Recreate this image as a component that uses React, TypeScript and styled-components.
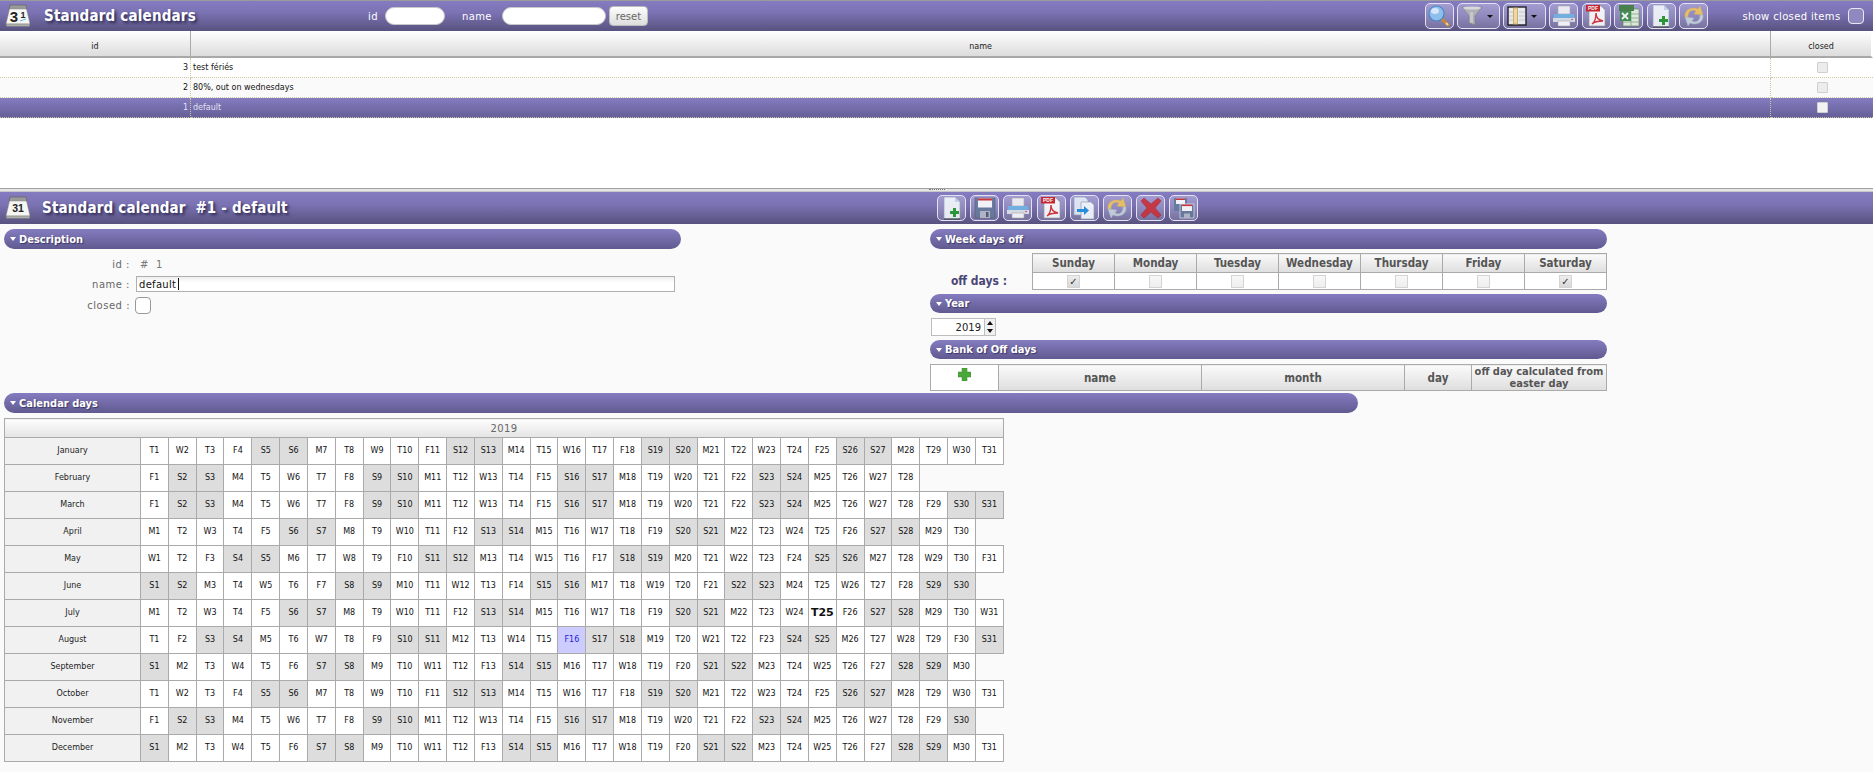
import React from 'react';
import styled, { createGlobalStyle } from 'styled-components';

const GlobalStyle = createGlobalStyle`
    html, body {
        margin: 0;
        padding: 0;
        background: #fafafa;
    }
    body {
        font-family: 'DejaVu Sans', Verdana, sans-serif;
        overflow: hidden;
    }
`;

const Page = styled.div`
    display: flex;
    flex-direction: column;
    width: 1873px;
    height: 772px;
    overflow: hidden;

    & > * {
        flex-shrink: 0;
    }
`;

const TopPane = styled.div`
    height: 188px;
    background: #fff;
`;

const Bar = styled.div<{ $detail?: boolean }>`
    display: flex;
    align-items: center;
    box-sizing: border-box;
    height: ${(p) => (p.$detail ? '32px' : '31px')};
    padding-left: 5px;
    border-top: ${(p) => (p.$detail ? 'none' : '1px solid #9a9a9a')};
    background: linear-gradient(#847cc0, #7a72b2 40%, #58527f);
`;

const Title = styled.div<{ $width: number; $gap: number }>`
    width: ${(p) => p.$width}px;
    margin-left: ${(p) => p.$gap}px;
    color: #fff;
    font-size: 15px;
    font-weight: bold;
    font-stretch: condensed;
    letter-spacing: 0.18px;
    white-space: pre;
    text-shadow: 2px 2px 3px #2b2750;
`;

const FilterLabel = styled.label<{ $gap: number }>`
    margin-left: ${(p) => p.$gap}px;
    color: #fff;
    font-size: 10px;
    letter-spacing: 0.4px;
`;

const FilterInput = styled.input<{ $width: number; $gap: number }>`
    box-sizing: border-box;
    width: ${(p) => p.$width}px;
    height: 18px;
    margin-left: ${(p) => p.$gap}px;
    background: #fff;
    border: 1px solid #c8c8c8;
    border-radius: 9px;
    outline: none;
`;

const ResetButton = styled.button`
    box-sizing: border-box;
    width: 39px;
    height: 20px;
    margin-left: 3px;
    padding: 0;
    color: #666;
    background: linear-gradient(#fdfdfd, #dddddd);
    border: 1px solid #bbb;
    border-radius: 4px;
    font-family: inherit;
    font-size: 10px;
`;

const Tools = styled.div<{ $left: number; $gap: number }>`
    display: flex;
    gap: ${(p) => p.$gap}px;
    margin-left: ${(p) => p.$left}px;
`;

const ToolButton = styled.button<{ $wide?: boolean }>`
    display: flex;
    align-items: center;
    justify-content: ${(p) => (p.$wide ? 'flex-start' : 'center')};
    box-sizing: border-box;
    width: ${(p) => (p.$wide ? '42.5px' : '29px')};
    height: 26px;
    padding: ${(p) => (p.$wide ? '0 0 0 3px' : '0')};
    background: linear-gradient(#a29cd2, #8d87bb 55%, #77719f);
    border: 1px solid #e4e2f2;
    border-radius: 5px;

    & svg {
        opacity: 0.88;
    }
`;

const Caret = styled.span`
    margin-left: 4px;
    border-top: 3px solid #111;
    border-left: 3px solid transparent;
    border-right: 3px solid transparent;
`;

const ShowClosed = styled.span`
    margin-left: 34px;
    color: #fff;
    font-size: 10px;
    letter-spacing: 0.35px;
    white-space: nowrap;
`;

const ShowBox = styled.span`
    box-sizing: border-box;
    width: 16px;
    height: 16px;
    margin-left: 8px;
    background: #8f89c0;
    border: 1px solid #e8e8f4;
    border-radius: 4px;
`;

const ListTable = styled.table`
    width: 100%;
    table-layout: fixed;
    border-collapse: separate;
    border-spacing: 0;
`;

const IdCol = styled.col`
    width: 191px;
`;

const ClosedCol = styled.col`
    width: 102px;
`;

const ListHead = styled.th`
    box-sizing: border-box;
    height: 27px;
    padding: 5px 0 0;
    background: linear-gradient(#ffffff, #dcdcdc);
    border-right: 1px solid #aaa;
    border-bottom: 2px solid #a8a8a8;
    color: #222;
    font-size: 8px;
    font-weight: normal;

    &:last-child {
        border-right: 2px solid #fff;
    }
`;

const ListRow = styled.tr<{ $selected?: boolean; $odd?: boolean }>`
    color: ${(p) => (p.$selected ? '#e4e2f2' : '#111')};
    background: ${(p) =>
        p.$selected ? 'linear-gradient(#847cc0, #645e96)' : p.$odd ? '#fafafa' : '#fff'};
`;

const ListCell = styled.td<{ $align?: string }>`
    box-sizing: border-box;
    height: 20px;
    padding: 0 2px;
    border-right: 1px dotted #cfc7a6;
    border-bottom: 1px dotted #cfc7a6;
    font-size: 8px;
    text-align: ${(p) => p.$align || 'left'};

    &:last-child {
        border-right: none;
    }
`;

const ListCheck = styled.span<{ $selected?: boolean }>`
    display: inline-block;
    box-sizing: border-box;
    width: 11px;
    height: 11px;
    vertical-align: middle;
    background: ${(p) => (p.$selected ? '#f2f2f2' : '#ececec')};
    border: 1px solid #cfcfcf;
    border-radius: 1px;
`;

const Splitter = styled.div`
    display: flex;
    justify-content: center;
    box-sizing: border-box;
    height: 4px;
    border-top: 1px solid #a0a0a0;
    border-bottom: 1px solid #c8c8c8;
    background: #e6e6e6;
`;

const SplitDots = styled.span`
    width: 16px;
    height: 1px;
    border-top: 1px dotted #777;
`;

const DetailColumns = styled.div`
    display: grid;
    grid-template-columns: 930px 677px;
    padding-top: 5px;
`;

const LeftColumn = styled.div`
    padding-left: 4px;
`;

const RightColumn = styled.div`
    display: flex;
    flex-direction: column;
`;

const Section = styled.div<{ $width?: number; $height?: number }>`
    display: flex;
    align-items: center;
    flex-shrink: 0;
    box-sizing: border-box;
    width: ${(p) => (p.$width ? `${p.$width}px` : '100%')};
    height: ${(p) => p.$height || 20}px;
    padding-left: 6px;
    color: #fff;
    background: linear-gradient(#847cc0, #605a90);
    border-radius: 10px;
    font-size: 11px;
    font-weight: bold;
    font-stretch: condensed;
    text-shadow: 1px 1px 1px #3a3666;
`;

const SectionArrow = styled.span`
    margin-right: 3px;
    border-top: 4px solid #fff;
    border-left: 3px solid transparent;
    border-right: 3px solid transparent;
`;

const FormRow = styled.div<{ $top: number; $height: number }>`
    display: flex;
    align-items: center;
    height: ${(p) => p.$height}px;
    margin-top: ${(p) => p.$top}px;
`;

const FormLabel = styled.label`
    width: 126px;
    flex-shrink: 0;
    margin-right: 6px;
    color: #666;
    font-size: 10px;
    letter-spacing: 0.5px;
    text-align: right;
    white-space: pre;
`;

const FormValue = styled.span`
    margin-left: 4px;
    color: #777;
    font-size: 10px;
    letter-spacing: 0.4px;
    white-space: pre;
`;

const NameField = styled.div`
    position: relative;
    display: flex;
`;

const NameInput = styled.input`
    box-sizing: border-box;
    width: 539px;
    height: 16px;
    padding: 0 2px;
    background: linear-gradient(#eeeeee, #ffffff 40%);
    border: 1px solid #b0b0b0;
    outline: none;
    color: #111;
    font-family: inherit;
    font-size: 10px;
    letter-spacing: 0.3px;
`;

const TextCursor = styled.span`
    position: absolute;
    top: 2px;
    left: 42px;
    width: 1px;
    height: 12px;
    background: #111;
`;

const ClosedBox = styled.span`
    box-sizing: border-box;
    width: 16px;
    height: 17px;
    margin-left: -1px;
    background: #fff;
    border: 1px solid #999;
    border-radius: 4px;
`;

const WeekWrap = styled.div`
    display: flex;
    align-items: flex-end;
    margin: 4px 0;
`;

const OffLabel = styled.div`
    width: 77px;
    height: 18px;
    margin-right: 25px;
    color: #4a4676;
    font-size: 12px;
    font-weight: bold;
    font-stretch: condensed;
    line-height: 18px;
    text-align: right;
    white-space: nowrap;
`;

const GridTable = styled.table<{ $width: number }>`
    box-sizing: border-box;
    width: ${(p) => p.$width}px;
    table-layout: fixed;
    border-collapse: collapse;
`;

const GreyHead = styled.th<{ $small?: boolean }>`
    box-sizing: border-box;
    padding: 0;
    height: 19px;
    color: #555;
    background: linear-gradient(#fafafa, #dedede);
    border: 1px solid #aaa;
    font-size: ${(p) => (p.$small ? '11px' : '11.5px')};
    font-weight: bold;
    font-stretch: condensed;
    line-height: 12px;
`;

const CheckCell = styled.td`
    box-sizing: border-box;
    height: 17px;
    padding: 0;
    background: #fff;
    border: 1px solid #aaa;
    line-height: 0;
    text-align: center;
`;

const WeekCheck = styled.span<{ $on?: boolean }>`
    display: inline-block;
    box-sizing: border-box;
    width: 13px;
    height: 13px;
    vertical-align: middle;
    color: #333;
    background: ${(p) => (p.$on ? 'linear-gradient(#eeeeee, #d8d8d8)' : 'linear-gradient(#f8f8f8, #eeeeee)')};
    border: 1px solid #d4d4d4;
    font-size: 10px;
    line-height: 11px;
`;

const YearWrap = styled.div`
    display: flex;
    align-items: stretch;
    height: 18px;
    margin: 5px 0 4px 1px;
`;

const YearInput = styled.input`
    box-sizing: border-box;
    width: 54px;
    padding: 0 3px 0 0;
    background: #fff;
    border: 1px solid #bdbdbd;
    outline: none;
    color: #222;
    font-family: inherit;
    font-size: 10px;
    text-align: right;
`;

const Spinner = styled.div`
    display: flex;
    flex-direction: column;
    width: 10px;
    border: 1px solid #bdbdbd;
    border-left: none;
`;

const SpinArrow = styled.span<{ $down?: boolean }>`
    flex: 1;
    display: flex;
    align-items: center;
    justify-content: center;
    background: #f0f0f0;

    &::before {
        content: '';
        border-left: 3px solid transparent;
        border-right: 3px solid transparent;
        ${(p) => (p.$down ? 'border-top: 4px solid #111;' : 'border-bottom: 4px solid #111;')}
    }
`;

const BankWrap = styled.div`
    margin-top: 5px;
`;

const PlusCell = styled.th`
    box-sizing: border-box;
    padding: 3px 0 0;
    height: 26px;
    vertical-align: top;
    background: #fff;
    border: 1px solid #aaa;
    line-height: 0;
`;

const NarrowCol = styled.col<{ $width: number }>`
    width: ${(p) => p.$width}px;
`;

const CalendarWrap = styled.div`
    padding: 2px 0 0 4px;
`;

const CalendarTable = styled.table`
    width: 1000px;
    height: 342px;
    margin-top: 5px;
    table-layout: fixed;
    border-collapse: collapse;
`;

const MonthCol = styled.col`
    width: 136px;
`;

const YearHead = styled.th`
    height: 18px;
    padding: 0;
    color: #666;
    background: linear-gradient(#fdfdfd, #e4e4e4);
    border: 1px solid #aaa;
    font-size: 10px;
    font-weight: normal;
    letter-spacing: 0.4px;
`;

const MonthCell = styled.td`
    height: 26px;
    padding: 0;
    color: #222;
    background: #f1f1f1;
    border: 1px solid #aaa;
    font-size: 8px;
    line-height: 10px;
    text-align: center;
`;

const DayCell = styled.td<{ $off?: boolean; $current?: boolean; $today?: boolean }>`
    padding: 0;
    color: ${(p) => (p.$current ? '#2222dd' : '#111')};
    background: ${(p) => (p.$current ? '#ccccff' : p.$off ? '#dddddd' : '#fff')};
    border: 1px solid #aaa;
    font-size: ${(p) => (p.$today ? '11px' : '8px')};
    font-weight: ${(p) => (p.$today ? 'bold' : 'normal')};
    line-height: 10px;
    text-align: center;
    white-space: nowrap;
`;

const CalendarIcon = ({ flip }: { flip?: boolean }) => (
    <svg width="26" height="24" viewBox="0 0 26 24">
        <path d="M5 1h16l1 5H4z" fill="#9a9a98" stroke="#5a5a5a" strokeWidth="0.6" />
        <path d="M4.5 5h17L25 20H1z" fill="#f6f6f2" stroke="#8a8a8a" strokeWidth="0.5" />
        <path d="M1 20h24l-.5 2.5h-23z" fill="#aeaeac" stroke="#6d6d6d" strokeWidth="0.4" />
        {flip ? (
            <>
                <text x="9" y="18" fontSize="15" fontWeight="bold" fontFamily="'Liberation Sans', sans-serif" textAnchor="middle" fill="#222">3</text>
                <text x="18" y="14" fontSize="9" fontWeight="bold" fontFamily="'Liberation Sans', sans-serif" textAnchor="middle" fill="#222">1</text>
                <path d="M15 17l6-2" stroke="#6fb5e6" strokeWidth="1" />
            </>
        ) : (
            <text x="13" y="16" fontSize="10.5" fontWeight="bold" fontFamily="'Liberation Sans', sans-serif" textAnchor="middle" fill="#222">31</text>
        )}
    </svg>
);

const SearchIcon = () => (
    <svg width="24" height="24" viewBox="0 0 24 24">
        <path d="M14 14l7 7" stroke="#d88a22" strokeWidth="3" strokeLinecap="round" />
        <path d="M19 19l2 2" stroke="#f4e3a0" strokeWidth="2" />
        <circle cx="9.5" cy="9.5" r="7.5" fill="#8ec7f2" stroke="#3f86c8" strokeWidth="1.2" />
        <ellipse cx="8" cy="7" rx="4" ry="3" fill="#e0f2ff" />
    </svg>
);

const FunnelIcon = () => (
    <svg width="22" height="24" viewBox="0 0 22 24">
        <path d="M1 3h20l-7 9v9l-6-2v-7z" fill="#b4b4b4" stroke="#7f7f7f" strokeWidth="0.7" />
        <ellipse cx="11" cy="4" rx="9" ry="1.6" fill="#e2e2e2" />
        <path d="M9 8h3v11l-3-1z" fill="#cfcfcf" />
    </svg>
);

const ColumnsIcon = () => (
    <svg width="20" height="20" viewBox="0 0 20 20">
        <rect x="1" y="1" width="18" height="18" fill="#f4f4f4" stroke="#111" strokeWidth="1.4" />
        <rect x="6.5" y="2" width="4" height="16" fill="#f6e3a8" stroke="#d9a83c" strokeWidth="0.8" />
        <path d="M12 6h6M12 10h6M12 14h6M2 6h4M2 10h4M2 14h4" stroke="#c8c8c8" strokeWidth="0.8" />
    </svg>
);

const PrintIcon = () => (
    <svg width="24" height="24" viewBox="0 0 24 24">
        <path d="M6 2h12v8H6z" fill="#f5f5f5" stroke="#a8a8a8" strokeWidth="0.6" />
        <path d="M2 10h20l1 8H1z" fill="#6fb5e6" />
        <path d="M1 14h22v4H1z" fill="#dfe6ea" />
        <path d="M6 17h12v5H6z" fill="#fff" stroke="#a8a8a8" strokeWidth="0.6" />
        <circle cx="20" cy="15.5" r="0.8" fill="#d33" />
    </svg>
);

const PdfIcon = () => (
    <svg width="24" height="24" viewBox="0 0 24 24">
        <path d="M5 2h12l4 4v16H5z" fill="#fff" stroke="#9a9a9a" strokeWidth="0.7" />
        <rect x="2" y="1" width="14" height="6.5" fill="#cc1b1b" />
        <text x="9" y="6.2" fontSize="5" fontWeight="bold" fontFamily="'Liberation Sans', sans-serif" textAnchor="middle" fill="#fff">PDF</text>
        <path d="M8 20c3-2 4-6 4-11 0 4 2 7 7 8-4 0-8 0-11 3z" fill="none" stroke="#d8282a" strokeWidth="1.4" />
    </svg>
);

const ExcelIcon = () => (
    <svg width="24" height="24" viewBox="0 0 24 24">
        <rect x="6" y="5" width="16" height="17" fill="#eaf3e2" stroke="#5f9155" strokeWidth="0.7" />
        <path d="M14 5v17M6 10h16M6 14h16M6 18h16" stroke="#7fae76" strokeWidth="0.8" />
        <rect x="2" y="1" width="15" height="6" fill="#3d7d3b" />
        <rect x="3" y="7" width="11" height="10" fill="#3a8f46" />
        <path d="M5 9l6 6M11 9l-6 6" stroke="#fff" strokeWidth="1.8" />
    </svg>
);

const NewIcon = () => (
    <svg width="24" height="24" viewBox="0 0 24 24">
        <path d="M4 1h11l5 5v17H4z" fill="#f6fafd" stroke="#8aa0b4" strokeWidth="0.7" />
        <path d="M15 1v5h5z" fill="#c9d8e6" />
        <path d="M4 23h16" stroke="#222" strokeWidth="1" />
        <path d="M13 12h3v3h3v3h-3v3h-3v-3h-3v-3h3z" fill="#1e9a28" />
    </svg>
);

const RefreshIcon = () => (
    <svg width="24" height="24" viewBox="0 0 24 24">
        <path d="M3 13C2 6 9 2 16 5l2-3 3 9-9-1 2-3c-4-2-8 0-8 6z" fill="#f2c55c" stroke="#e0b24a" strokeWidth="0.5" />
        <path d="M21 11c1 7-6 11-13 8l-2 3-3-9 9 1-2 3c4 2 8 0 8-6z" fill="#c8d4de" stroke="#a8b8c6" strokeWidth="0.5" />
    </svg>
);

const SaveIcon = () => (
    <svg width="24" height="24" viewBox="0 0 24 24">
        <path d="M2 2h20v20H2z" fill="#63789a" stroke="#4d586c" strokeWidth="0.6" />
        <rect x="5" y="2.5" width="14" height="9" fill="#fff" />
        <rect x="5" y="2.5" width="14" height="2" fill="#d02a2a" />
        <rect x="7" y="15" width="10" height="7" fill="#b4bcc8" />
        <rect x="13" y="16" width="2.5" height="5" fill="#4d586c" />
    </svg>
);

const CopyIcon = () => (
    <svg width="24" height="24" viewBox="0 0 24 24">
        <path d="M2 1h11l3 3v15H2z" fill="#e8f0f8" stroke="#8aa0b4" strokeWidth="0.7" />
        <path d="M9 6h10l3 3v14H9z" fill="#fafcff" stroke="#8aa0b4" strokeWidth="0.7" />
        <path d="M5 13h7v-3l5 4.5-5 4.5v-3H5z" fill="#1b8fe0" />
    </svg>
);

const DeleteIcon = () => (
    <svg width="24" height="24" viewBox="0 0 24 24">
        <path d="M5 2l7 6 7-6 3 3-6 7 6 7-3 3-7-6-7 6-3-3 6-7-6-7z" fill="#cc2e36" stroke="#a82028" strokeWidth="0.6" />
    </svg>
);

const SaveAllIcon = () => (
    <svg width="24" height="24" viewBox="0 0 24 24">
        <path d="M2 2h13v13H2z" fill="#63789a" />
        <rect x="4" y="2.5" width="9" height="5.5" fill="#fff" />
        <rect x="4" y="2.5" width="9" height="1.5" fill="#d02a2a" />
        <path d="M8 8h14v14H8z" fill="#63789a" stroke="#f4f4f4" strokeWidth="0.7" />
        <rect x="10" y="8.5" width="10" height="6.5" fill="#fff" />
        <rect x="10" y="8.5" width="10" height="1.6" fill="#d02a2a" />
        <rect x="12" y="17.5" width="6" height="4.5" fill="#b4bcc8" />
    </svg>
);

const PlusIcon = () => (
    <svg width="13" height="13" viewBox="0 0 13 13">
        <path d="M4 0h5v4h4v5H9v4H4V9H0V4h4z" fill="#4aa83a" stroke="#3b8a2e" strokeWidth="0.5" />
    </svg>
);

const MONTHS = [
    'January',
    'February',
    'March',
    'April',
    'May',
    'June',
    'July',
    'August',
    'September',
    'October',
    'November',
    'December',
];
const LETTERS = ['S', 'M', 'T', 'W', 'T', 'F', 'S'];
const WEEK = ['Sunday', 'Monday', 'Tuesday', 'Wednesday', 'Thursday', 'Friday', 'Saturday'];
const LIST = [
    { id: 3, name: 'test fériés' },
    { id: 2, name: '80%, out on wednesdays' },
    { id: 1, name: 'default' },
];

const daysOf = (month: number) => new Date(2019, month + 1, 0).getDate();

const App: React.FC = () => {
    return (
        <Page>
            <GlobalStyle />
            <TopPane>
                <Bar>
                    <CalendarIcon flip />
                    <Title $width={150} $gap={13}>Standard calendars</Title>
                    <FilterLabel $gap={174}>id</FilterLabel>
                    <FilterInput $width={60} $gap={7} />
                    <FilterLabel $gap={17}>name</FilterLabel>
                    <FilterInput $width={104} $gap={10} />
                    <ResetButton>reset</ResetButton>
                    <Tools $left={777} $gap={3.5}>
                        <ToolButton><SearchIcon /></ToolButton>
                        <ToolButton $wide><FunnelIcon /><Caret /></ToolButton>
                        <ToolButton $wide><ColumnsIcon /><Caret /></ToolButton>
                        <ToolButton><PrintIcon /></ToolButton>
                        <ToolButton><PdfIcon /></ToolButton>
                        <ToolButton><ExcelIcon /></ToolButton>
                        <ToolButton><NewIcon /></ToolButton>
                        <ToolButton><RefreshIcon /></ToolButton>
                    </Tools>
                    <ShowClosed>show closed items</ShowClosed>
                    <ShowBox />
                </Bar>
                <ListTable>
                    <colgroup>
                        <IdCol />
                        <col />
                        <ClosedCol />
                    </colgroup>
                    <thead>
                        <tr>
                            <ListHead>id</ListHead>
                            <ListHead>name</ListHead>
                            <ListHead>closed</ListHead>
                        </tr>
                    </thead>
                    <tbody>
                        {LIST.map((row, i) => (
                            <ListRow key={row.id} $odd={i === 1} $selected={row.id === 1}>
                                <ListCell $align="right">{row.id}</ListCell>
                                <ListCell>{row.name}</ListCell>
                                <ListCell $align="center">
                                    <ListCheck $selected={row.id === 1} />
                                </ListCell>
                            </ListRow>
                        ))}
                    </tbody>
                </ListTable>
            </TopPane>
            <Splitter>
                <SplitDots />
            </Splitter>
            <Bar $detail>
                <CalendarIcon />
                <Title $width={250} $gap={11}>{'Standard calendar  #1 - default'}</Title>
                <Tools $left={645} $gap={4.2}>
                    <ToolButton><NewIcon /></ToolButton>
                    <ToolButton><SaveIcon /></ToolButton>
                    <ToolButton><PrintIcon /></ToolButton>
                    <ToolButton><PdfIcon /></ToolButton>
                    <ToolButton><CopyIcon /></ToolButton>
                    <ToolButton><RefreshIcon /></ToolButton>
                    <ToolButton><DeleteIcon /></ToolButton>
                    <ToolButton><SaveAllIcon /></ToolButton>
                </Tools>
            </Bar>
            <DetailColumns>
                <LeftColumn>
                    <Section $width={677}>
                        <SectionArrow />
                        Description
                    </Section>
                    <FormRow $top={8} $height={14}>
                        <FormLabel>id :</FormLabel>
                        <FormValue>{'#  1'}</FormValue>
                    </FormRow>
                    <FormRow $top={5} $height={16}>
                        <FormLabel>name :</FormLabel>
                        <NameField>
                            <NameInput defaultValue="default" />
                            <TextCursor />
                        </NameField>
                    </FormRow>
                    <FormRow $top={5} $height={17}>
                        <FormLabel>closed :</FormLabel>
                        <ClosedBox />
                    </FormRow>
                </LeftColumn>
                <RightColumn>
                    <Section>
                        <SectionArrow />
                        Week days off
                    </Section>
                    <WeekWrap>
                        <OffLabel>off days :</OffLabel>
                        <GridTable $width={575}>
                            <thead>
                                <tr>
                                    {WEEK.map((day) => (
                                        <GreyHead key={day}>{day}</GreyHead>
                                    ))}
                                </tr>
                            </thead>
                            <tbody>
                                <tr>
                                    {WEEK.map((day, i) => (
                                        <CheckCell key={day}>
                                            <WeekCheck $on={i === 0 || i === 6}>
                                                {i === 0 || i === 6 ? '✓' : ''}
                                            </WeekCheck>
                                        </CheckCell>
                                    ))}
                                </tr>
                            </tbody>
                        </GridTable>
                    </WeekWrap>
                    <Section $height={19}>
                        <SectionArrow />
                        Year
                    </Section>
                    <YearWrap>
                        <YearInput defaultValue="2019" />
                        <Spinner>
                            <SpinArrow />
                            <SpinArrow $down />
                        </Spinner>
                    </YearWrap>
                    <Section $height={19}>
                        <SectionArrow />
                        Bank of Off days
                    </Section>
                    <BankWrap>
                        <GridTable $width={677}>
                            <colgroup>
                                <NarrowCol $width={68} />
                                <NarrowCol $width={203} />
                                <NarrowCol $width={203} />
                                <NarrowCol $width={67} />
                                <col />
                            </colgroup>
                            <thead>
                                <tr>
                                    <PlusCell><PlusIcon /></PlusCell>
                                    <GreyHead>name</GreyHead>
                                    <GreyHead>month</GreyHead>
                                    <GreyHead>day</GreyHead>
                                    <GreyHead $small>off day calculated from easter day</GreyHead>
                                </tr>
                            </thead>
                        </GridTable>
                    </BankWrap>
                </RightColumn>
            </DetailColumns>
            <CalendarWrap>
                <Section $width={1354}>
                    <SectionArrow />
                    Calendar days
                </Section>
                <CalendarTable>
                    <colgroup>
                        <MonthCol />
                    </colgroup>
                    <thead>
                        <tr>
                            <YearHead colSpan={32}>2019</YearHead>
                        </tr>
                    </thead>
                    <tbody>
                        {MONTHS.map((month, m) => (
                            <tr key={month}>
                                <MonthCell>{month}</MonthCell>
                                {Array.from({ length: daysOf(m) }, (_, d) => {
                                    const weekDay = new Date(2019, m, d + 1).getDay();
                                    const today = m === 6 && d + 1 === 25;
                                    const current = m === 7 && d + 1 === 16;
                                    return (
                                        <DayCell
                                            key={d}
                                            $off={weekDay === 0 || weekDay === 6}
                                            $today={today}
                                            $current={current}
                                        >
                                            {LETTERS[weekDay]}
                                            {d + 1}
                                        </DayCell>
                                    );
                                })}
                            </tr>
                        ))}
                    </tbody>
                </CalendarTable>
            </CalendarWrap>
        </Page>
    );
};

export default App;
